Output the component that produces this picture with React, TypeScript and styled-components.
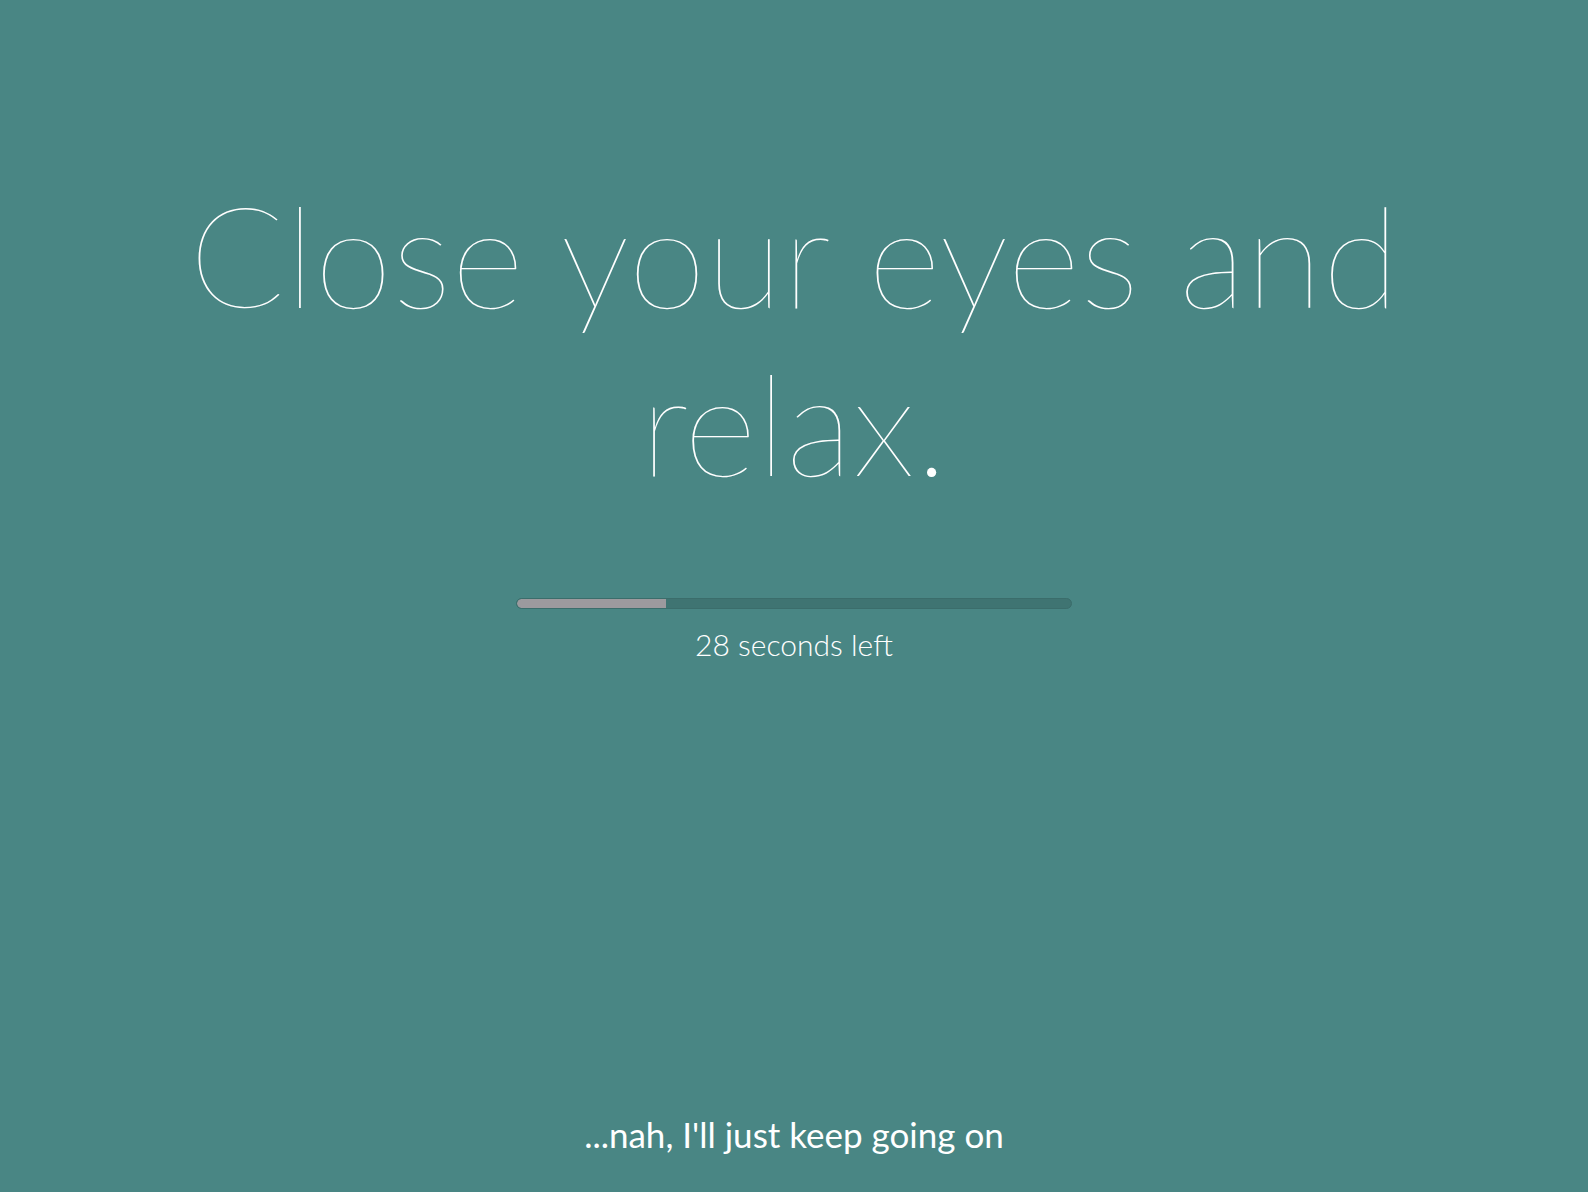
import React from "react";
import styled, { createGlobalStyle } from "styled-components";

const GlobalStyle = createGlobalStyle`
  html, body {
    margin: 0;
    padding: 0;
    background: #498684;
  }
  body {
    font-family: Lato, "Open Sans", sans-serif;
    color: #ffffff;
  }
`;

const Screen = styled.div`
  display: flex;
  flex-direction: column;
  align-items: center;
  height: 100vh;
  box-sizing: border-box;
  padding: 170px 0 37px;
  background: #498684;
`;

const Title = styled.h1`
  margin: 0;
  font-size: 141px;
  font-weight: 100;
  line-height: 168px;
  text-align: center;
  max-width: 1300px;
`;

const Track = styled.div`
  margin-top: 92px;
  width: 556px;
  height: 11px;
  box-sizing: border-box;
  border-radius: 6px;
  background: #3f7472;
  border: 1px solid #3b6d6b;
  overflow: hidden;
`;

const Fill = styled.div`
  height: 100%;
  background: #9c9a9e;
  border-radius: 6px 0 0 6px;
`;

const Remaining = styled.div`
  margin-top: 17px;
  font-size: 30px;
  font-weight: 300;
  line-height: 1.2;
`;

const Skip = styled.a`
  margin-top: auto;
  font-size: 35px;
  font-weight: 400;
  line-height: 1.2;
  color: #ffffff;
  text-decoration: none;
  cursor: pointer;
`;

const total = 38;
const left = 28;

export default function App() {
  const pct = ((total - left) / total) * 100 + 0.6;
  return (
    <>
      <GlobalStyle />
      <Screen>
        <Title>Close your eyes and relax.</Title>
        <Track>
          <Fill style={{ width: `${pct}%` }} />
        </Track>
        <Remaining>{left} seconds left</Remaining>
        <Skip>...nah, I'll just keep going on</Skip>
      </Screen>
    </>
  );
}
